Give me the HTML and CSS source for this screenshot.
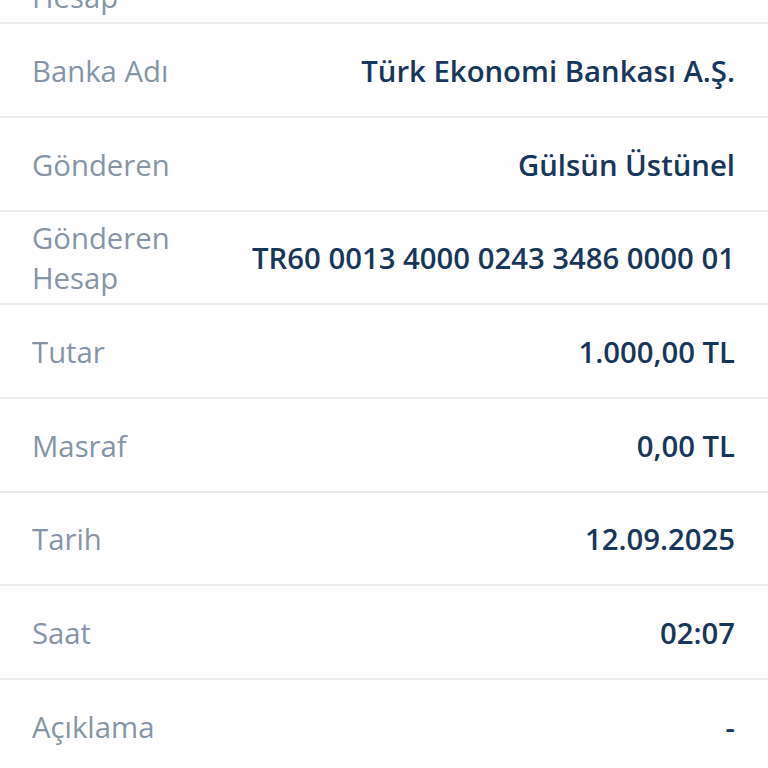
FILE: index.html
```html
<!DOCTYPE html>
<html lang="tr">
<head>
  <meta charset="UTF-8">
  <meta name="viewport" content="width=device-width, initial-scale=1">
  <title>İşlem Detayı</title>
  <link rel="stylesheet" href="styles.css">
</head>
<body>

<div class="detail-list">
  <!-- satır yukarı kaydırılmış, sadece alt kısmı görünüyor -->
  <div class="detail-row">
    <div class="label">Alıcı<br>Hesap</div>
    <div class="value"></div>
  </div>
  <div class="detail-row">
    <div class="label">Banka Adı</div>
    <div class="value">Türk Ekonomi Bankası A.Ş.</div>
  </div>
  <div class="detail-row">
    <div class="label">Gönderen</div>
    <div class="value">Gülsün Üstünel</div>
  </div>
  <div class="detail-row">
    <div class="label">Gönderen Hesap</div>
    <div class="value">TR60 0013 4000 0243 3486 0000 01</div>
  </div>
  <div class="detail-row">
    <div class="label">Tutar</div>
    <div class="value">1.000,00 TL</div>
  </div>
  <div class="detail-row">
    <div class="label">Masraf</div>
    <div class="value">0,00 TL</div>
  </div>
  <div class="detail-row">
    <div class="label">Tarih</div>
    <div class="value">12.09.2025</div>
  </div>
  <div class="detail-row">
    <div class="label">Saat</div>
    <div class="value">02:07</div>
  </div>
  <div class="detail-row">
    <div class="label">Açıklama</div>
    <div class="value">-</div>
  </div>
</div>

</body>
</html>
```

FILE: styles.css
```css
html, body {
  margin: 0;
  background: #ffffff;
  overflow: hidden;
}
body {
  font-family: 'Open Sans', 'Noto Sans', sans-serif;
  height: 768px;
}
.detail-list {
  margin-top: -69.5px;
}
.detail-row {
  display: flex;
  align-items: center;
  gap: 16px;
  height: 93.7px;
  box-sizing: border-box;
  padding: 2px 33px 0 32px;
  border-bottom: 2px solid #e9ecef;
}
.label {
  flex: 1;
  min-width: 0;
  color: #8595a7;
  font-size: 29.3px;
  line-height: 40px;
}
.value {
  flex-shrink: 0;
  white-space: nowrap;
  color: #17365b;
  font-size: 29.3px;
  font-weight: 600;
  line-height: 40px;
}
```
